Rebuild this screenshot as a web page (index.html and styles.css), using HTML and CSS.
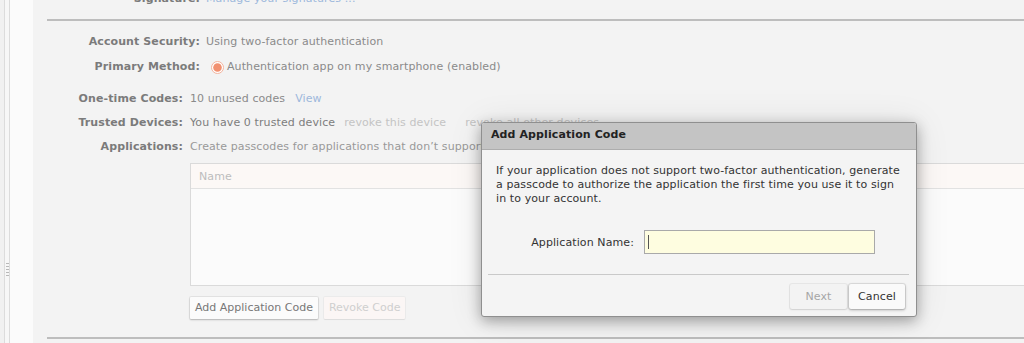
FILE: index.html
```html
<!DOCTYPE html>
<html>
<head>
<meta charset="utf-8">
<link rel="stylesheet" href="styles.css">
</head>
<body>
<div class="app">
  <div class="sidebar">
    <div class="side-line"></div>
    <div class="side-gap"><div class="grip"></div></div>
    <div class="side-line"></div>
    <div class="side-fill"></div>
  </div>
  <div class="content">
    <div class="grid1 sig-row">
      <span class="lbl">Signature:</span>
      <span class="val"><a class="link">Manage your signatures ...</a></span>
    </div>
    <div class="rule"></div>
    <div class="grid1 sec1">
      <span class="lbl">Account Security:</span>
      <span class="val">Using two-factor authentication</span>
      <span class="lbl">Primary Method:</span>
      <span class="val radio-val">
        <svg class="radio" width="13" height="13" viewBox="0 0 13 13"><circle cx="6.5" cy="6.5" r="6" fill="#fff" stroke="#f3b29c" stroke-width="1"/><circle cx="6.5" cy="6.5" r="4.3" fill="#f19070"/></svg>
        <span>Authentication app on my smartphone (enabled)</span>
      </span>
    </div>
    <div class="grid2 sec2">
      <span class="lbl">One-time Codes:</span>
      <span class="val">10 unused codes<a class="link view">View</a></span>
      <span class="lbl">Trusted Devices:</span>
      <span class="val"><span class="dark">You have 0 trusted device</span><span class="faint rv1">revoke this device</span><span class="faint rv2">revoke all other devices</span></span>
      <span class="lbl">Applications:</span>
      <span class="val light">Create passcodes for applications that don’t support two-factor authentication.</span>
      <div class="table">
        <div class="thead">Name</div>
        <div class="tbody"></div>
      </div>
      <div class="btn-row">
        <span class="btn">Add Application Code</span>
        <span class="btn disabled">Revoke Code</span>
      </div>
    </div>
    <div class="rule bottom"></div>
  </div>
</div>

<div class="dialog">
  <div class="dlg-title">Add Application Code</div>
  <div class="dlg-body">
    <p class="dlg-text">If your application does not support two-factor authentication, generate a passcode to authorize the application the first time you use it to sign in to your account.</p>
    <div class="dlg-form">
      <span class="dlg-lbl">Application Name:</span>
      <div class="dlg-input"><span class="caret"></span></div>
    </div>
  </div>
  <div class="dlg-sep"></div>
  <div class="dlg-foot">
    <span class="dbtn next">Next</span>
    <span class="dbtn cancel">Cancel</span>
  </div>
</div>
</body>
</html>
```

FILE: styles.css
```css
html, body {
  margin: 0;
  padding: 0;
  overflow: hidden;
  background: #f3f3f3;
  font-family: "DejaVu Sans", "Noto Sans", sans-serif;
  font-size: 11px;
  letter-spacing: 0.1px;
}
.app {
  display: flex;
  height: 343px;
}
.sidebar {
  display: flex;
  width: 33px;
  flex: none;
  background: #f1f1f1;
  padding-left: 4px;
  box-sizing: border-box;
}
.side-line {
  width: 1px;
  background: #dcdcdc;
}
.side-gap {
  width: 4px;
  background: #f7f7f7;
  position: relative;
}
.grip {
  position: absolute;
  left: 1px;
  top: 263px;
  width: 3px;
  height: 13px;
  background: repeating-linear-gradient(to bottom, #b8b8b8 0, #b8b8b8 1px, transparent 1px, transparent 3px);
}
.side-fill {
  flex: 1;
  background: #fbfbfb;
}
.content {
  flex: 1;
  padding-left: 14px;
  min-width: 0;
}
.grid1 {
  display: grid;
  grid-template-columns: 153px 1fr;
  column-gap: 6px;
  grid-auto-rows: 24px;
  row-gap: 1px;
}
.grid2 {
  display: grid;
  grid-template-columns: 136px 1fr;
  column-gap: 7px;
  grid-auto-rows: auto;
}
.lbl {
  text-align: right;
  font-weight: bold;
  color: #7b7b7b;
  line-height: 24px;
  white-space: nowrap;
}
.val {
  color: #8a8a8a;
  line-height: 24px;
  white-space: nowrap;
}
.sig-row {
  margin-top: -13px;
}
.link {
  color: #9db8dc;
}
.view {
  margin-left: 10px;
}
.rule {
  height: 2px;
  background: #bdbdbd;
  margin-top: 8px;
}
.rule.bottom {
  margin-top: 18px;
}
.sec1 {
  padding-top: 9px;
}
.radio-val {
  display: flex;
  align-items: center;
}
.radio {
  margin-left: 5px;
  margin-right: 3px;
  margin-top: 1px;
}
.sec2 {
  margin-top: 8px;
}
.dark {
  color: #7d7d7d;
}
.faint {
  color: #c4c4c4;
}
.rv1 {
  margin-left: 9px;
}
.rv2 {
  margin-left: 19px;
}
.light {
  color: #999;
}
.table {
  grid-column: 2;
  margin-top: 4px;
  width: 900px;
  border: 1px solid #dadada;
  background: #fbfbfb;
}
.thead {
  height: 24px;
  line-height: 25px;
  padding-left: 8px;
  color: #bdbdbd;
  background: #fcf8f6;
  border-bottom: 1px solid #e2e2e2;
}
.tbody {
  height: 96px;
}
.btn-row {
  grid-column: 2;
  margin-top: 11px;
  display: flex;
  gap: 6px;
}
.btn {
  height: 22px;
  line-height: 22px;
  padding: 0 5px;
  letter-spacing: 0;
  background: #fbfbfb;
  color: #777;
  border-radius: 1px;
  box-shadow: 0 0 0 1px rgba(0,0,0,0.06), 0 1px 2px rgba(0,0,0,0.22);
}
.btn.disabled {
  color: #cfcfcf;
  background: #fbf6f5;
  box-shadow: 0 0 0 1px rgba(0,0,0,0.03), 0 1px 1px rgba(0,0,0,0.06);
}

.dialog {
  position: absolute;
  left: 481px;
  top: 122px;
  width: 436px;
  height: 195px;
  box-sizing: border-box;
  border: 1px solid #8f8f8f;
  border-radius: 3px;
  background: #f4f4f4;
  color: #333;
  box-shadow: 0 4px 14px rgba(0,0,0,0.32), 0 2px 34px rgba(0,0,0,0.10);
  overflow: hidden;
}
.dlg-title {
  height: 26px;
  line-height: 24px;
  padding-left: 9px;
  background: #c4c4c4;
  border-bottom: 1px solid #adadad;
  font-weight: bold;
  color: #222;
}
.dlg-body {
  padding: 14px 14px 0 14px;
}
.dlg-text {
  margin: 0;
  line-height: 14px;
  color: #333;
}
.dlg-form {
  display: flex;
  align-items: center;
  gap: 10px;
  margin-top: 24px;
}
.dlg-lbl {
  width: 138px;
  text-align: right;
  color: #333;
}
.dlg-input {
  width: 231px;
  height: 24px;
  box-sizing: border-box;
  border: 1px solid #a9a9a9;
  background: #fefde0;
  display: flex;
  align-items: center;
  padding-left: 3px;
}
.caret {
  width: 1px;
  height: 14px;
  background: #555;
}
.dlg-sep {
  height: 1px;
  background: #c9c9c9;
  margin: 20px 7px 0 6px;
}
.dlg-foot {
  display: flex;
  justify-content: flex-end;
  gap: 2px;
  padding: 9px 11px 0 0;
}
.dbtn {
  height: 25px;
  line-height: 25px;
  text-align: center;
  border-radius: 2px;
}
.dbtn.next {
  width: 57px;
  color: #a6a6a6;
  background: #f3f3f3;
  box-shadow: 0 0 0 1px rgba(0,0,0,0.05), 0 1px 2px rgba(0,0,0,0.1);
}
.dbtn.cancel {
  width: 56px;
  color: #333;
  background: #fafafa;
  box-shadow: 0 0 0 1px rgba(0,0,0,0.08), 0 1px 3px rgba(0,0,0,0.3);
}
```
